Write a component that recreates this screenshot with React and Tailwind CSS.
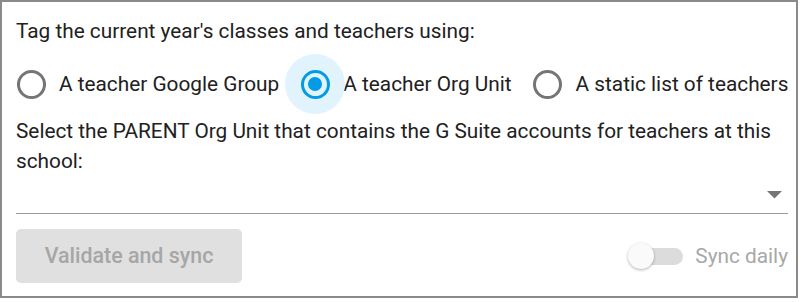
import React, { useState } from 'react'

function Radio({ checked }) {
  return (
    <span className="relative flex h-[52px] w-[52px] shrink-0 items-center justify-center">
      {checked && (
        <span className="absolute left-[-4px] top-[-4px] h-[60px] w-[60px] rounded-full bg-[#e1f3fd]" />
      )}
      <span
        className={`relative flex h-[29px] w-[29px] items-center justify-center rounded-full border-[3px] ${
          checked ? 'border-[#039be5]' : 'border-[#757575]'
        }`}
      >
        {checked && <span className="h-[14px] w-[14px] rounded-full bg-[#039be5]" />}
      </span>
    </span>
  )
}

const options = [
  { id: 'group', label: 'A teacher Google Group' },
  { id: 'ou', label: 'A teacher Org Unit' },
  { id: 'static', label: 'A static list of teachers' },
]

export default function App() {
  const [source, setSource] = useState('ou')

  return (
    <div className="h-[298px] w-[798px] border-2 border-[#8a8a8a] bg-white pl-[14px] pr-[8px] pt-[14px] font-['Roboto','Liberation_Sans',sans-serif] text-[20.8px] leading-[30px] text-[#212121]">
      <p>Tag the current year's classes and teachers using:</p>

      {/* source radios */}
      <div className="mt-[8px] ml-[-11px] flex h-[60px] items-center">
        {options.map((o) => (
          <label
            key={o.id}
            className="mr-[10px] flex cursor-pointer items-center"
            onClick={() => setSource(o.id)}
          >
            <Radio checked={source === o.id} />
            <span className="ml-[2px] whitespace-nowrap">{o.label}</span>
          </label>
        ))}
      </div>

      <p className="mt-[2px] whitespace-nowrap">
        Select the PARENT Org Unit that contains the G Suite accounts for teachers at this
        <br />
        school:
      </p>

      {/* org unit select */}
      <div className="flex h-[38px] items-center justify-end border-b-[1.5px] border-[#9a9a9a]">
        <svg width="15" height="8" viewBox="0 0 15 8" className="mr-[6px] mt-[1px]">
          <path d="M0 0 L15 0 L7.5 7.5 Z" fill="#757575" />
        </svg>
      </div>

      <div className="mt-[15px] flex items-center justify-between">
        <button
          type="button"
          disabled
          className="h-[54px] w-[226px] rounded-[5px] bg-[#e0e0e0] text-[21.4px] font-medium text-[#a6a6a6]"
        >
          Validate and sync
        </button>

        <div className="flex items-center">
          <div className="relative h-[26px] w-[55px]">
            <span className="absolute left-[12px] top-[4.5px] h-[17px] w-[43px] rounded-full bg-[#dcdcdc]" />
            <span className="absolute left-0 top-0 h-[26px] w-[26px] rounded-full bg-[#fafafa] shadow-[0_1px_3px_rgba(0,0,0,0.3)]" />
          </div>
          <span className="ml-[12px] text-[#a8a8a8]">Sync daily</span>
        </div>
      </div>
    </div>
  )
}
